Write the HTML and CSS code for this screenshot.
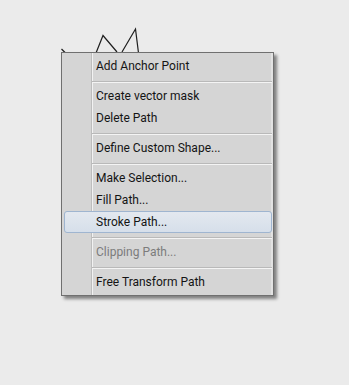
FILE: index.html
```html
<!DOCTYPE html>
<html lang="en">
<head>
  <meta charset="UTF-8">
  <title>Path Context Menu</title>
  <link rel="stylesheet" href="styles.css">
</head>
<body>

  <div class="canvas">
    <!-- path being edited, partly hidden under the menu -->
    <svg class="sketch" width="349" height="385" viewBox="0 0 349 385">
      <polyline points="61.5,49 65,52.5" />
      <polyline points="96,53 103,35.5 117,52" />
      <polyline points="122,52 135.5,29 138.5,53" />
    </svg>

    <ul class="menu">
      <li class="item">Add Anchor Point</li>
      <li class="sep"></li>
      <li class="item">Create vector mask</li>
      <li class="item">Delete Path</li>
      <li class="sep"></li>
      <li class="item">Define Custom Shape...</li>
      <li class="sep"></li>
      <li class="item">Make Selection...</li>
      <li class="item">Fill Path...</li>
      <li class="item active">Stroke Path...</li>
      <li class="sep"></li>
      <li class="item disabled">Clipping Path...</li>
      <li class="sep"></li>
      <li class="item">Free Transform Path</li>
    </ul>
  </div>

</body>
</html>
```

FILE: styles.css
```css
body {
  margin: 0;
  background: #ebebeb;
  font-family: Roboto, "Open Sans", sans-serif;
  font-size: 12px;
  color: #141414;
}

.canvas {
  position: relative;
  width: 349px;
  height: 385px;
  overflow: hidden;
}

.sketch {
  position: absolute;
  left: 0;
  top: 0;
}

.sketch polyline {
  fill: none;
  stroke: #1e1e1e;
  stroke-width: 1.2;
}

.menu {
  position: absolute;
  left: 61px;
  top: 52px;
  width: 211px;
  margin: 0;
  padding: 2px 0;
  list-style: none;
  border: 1px solid #707070;
  background-color: #d5d5d5;
  background-image: linear-gradient(to right, transparent 29px, #bdbdbd 29px, #bdbdbd 30px, #f2f2f2 30px, #f2f2f2 31px, transparent 31px);
  box-shadow: inset -2px 0 0 #e2e2e2, 3px 3px 3px rgba(0, 0, 0, 0.45);
}

.item {
  height: 22px;
  line-height: 22px;
  margin: 0 2px;
  padding-left: 32px;
  white-space: nowrap;
}

.item.active {
  height: 20px;
  line-height: 20px;
  margin: 0 1px 0 2px;
  padding-left: 31px;
  border: 1px solid #9fb5d0;
  border-radius: 3px;
  background: linear-gradient(#e3e8ef, #d6dfea);
}

.item.disabled {
  color: #7c7c7c;
}

.sep {
  height: 0;
  margin: 4px 1px 2px 30px;
  border-top: 1px solid #b9b9b9;
  border-bottom: 1px solid #f4f4f4;
}
```
